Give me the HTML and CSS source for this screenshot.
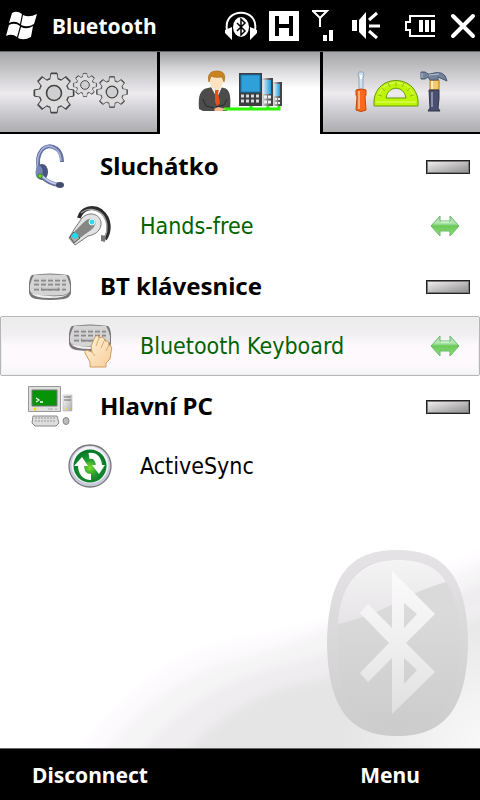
FILE: index.html
```
<!DOCTYPE html>
<html lang="en">
<head>
    <meta charset="UTF-8">
    <meta name="viewport" content="width=device-width, initial-scale=1.0">
    <title>Bluetooth</title>
    <link rel="stylesheet" href="styles.css">
</head>
<body>

    <!-- shared shapes -->
    <svg class="defs" width="0" height="0" aria-hidden="true">
        <defs>
            <linearGradient id="metal" x1="0" y1="0" x2="1" y2="1">
                <stop offset="0" stop-color="#fff"/>
                <stop offset="1" stop-color="#aaa"/>
            </linearGradient>
            <linearGradient id="phone" x1="0" y1="0" x2="1" y2="0">
                <stop offset="0" stop-color="#e4e4e4"/>
                <stop offset="0.8" stop-color="#444"/>
            </linearGradient>
            <linearGradient id="screen" x1="0" y1="0" x2="1" y2="0">
                <stop offset="0" stop-color="#d4ecf8"/>
                <stop offset="1" stop-color="#1e9cdc"/>
            </linearGradient>
            <linearGradient id="arrow" x1="0" y1="0" x2="0" y2="1">
                <stop offset="0" stop-color="#9fdfa0"/>
                <stop offset="0.35" stop-color="#b4e8b4"/>
                <stop offset="0.5" stop-color="#6cc85c"/>
                <stop offset="1" stop-color="#8fe36a"/>
            </linearGradient>
            <linearGradient id="skin" x1="0" y1="0" x2="1" y2="1">
                <stop offset="0" stop-color="#fff4dc"/>
                <stop offset="1" stop-color="#f7cd98"/>
            </linearGradient>
            <radialGradient id="green" cx="0.5" cy="0.55" r="0.5">
                <stop offset="0" stop-color="#7cdc2c"/>
                <stop offset="0.5" stop-color="#1f9a30"/>
                <stop offset="1" stop-color="#067a28"/>
            </radialGradient>
            <g id="teeth">
                <circle r="15"/>
                <path id="tooth" d="M-4-14 -3-20H3L4-14V14L3 20H-3L-4 14Z"/>
                <use href="#tooth" transform="rotate(45)"/>
                <use href="#tooth" transform="rotate(90)"/>
                <use href="#tooth" transform="rotate(135)"/>
            </g>
            <g id="gear">
                <use href="#teeth" fill="#444" stroke="#444"/>
                <use href="#teeth" fill="#dcdcdc" transform="scale(.94)"/>
                <circle r="7.5" fill="#cfced1" stroke="#444" stroke-width="1.6"/>
            </g>
            <g id="keyboard">
                <path d="M4 2Q22-1 40 2Q42 3 43 10V20Q42 25 36 26Q22 28 8 26Q2 25 1 20V10Q2 3 4 2Z" fill="#777"/>
                <path d="M6 2Q22 1 38 2Q40 5 42 12V18Q40 21 35 22Q22 23 9 22Q4 21 2 18V12Q4 5 6 2Z" fill="#d4d4d4"/>
                <path d="M3 20Q7 22 22 23T41 20Q38 25 22 25T3 20Z" fill="#f0f0f0"/>
                <path d="M6 7H38M6 11H38M6 16H38" stroke="#8a8a8a" stroke-width="3" stroke-dasharray="5 2"/>
                <path d="M6 6H38M6 10H38M6 15H38" stroke="#eee" stroke-dasharray="5 2"/>
                <path d="M13 16H31" stroke="#8a8a8a" stroke-width="3"/>
                <path d="M14 15H30" stroke="#eee"/>
            </g>
            <symbol id="connected" viewBox="0 0 30 22">
                <path d="M1 11 10 1V6H20V1L29 11 20 21V16H10V21Z" fill="url(#arrow)" stroke="#67b96b"/>
                <path d="M11 7H19" stroke="#e4f8e4"/>
            </symbol>
        </defs>
    </svg>

    <header class="status-bar">
        <button class="start" aria-label="Start">
            <svg width="32" height="30" viewBox="0 0 32 30">
                <path d="M6 2Q11-1 16 3L14 13Q9 9 3 12ZM17 4Q23 7 31 3L28 13Q22 17 15 14ZM3 14Q9 11 14 15L11 26Q6 22 0 25ZM15 16Q21 19 27 15L25 26Q18 30 12 27Z" fill="#fff"/>
            </svg>
        </button>
        <h1 class="title">Bluetooth</h1>
        <div class="indicators">
            <svg width="32" height="30" viewBox="0 0 32 30">
                <path d="M2 19C-2-4 34-4 30 19" fill="none" stroke="#fff" stroke-width="2"/>
                <path d="M0 19 7 16V29L0 22ZM32 19 25 16V29L32 22Z" fill="#fff"/>
                <ellipse cx="16" cy="16" rx="8" ry="10" fill="#fff"/>
                <path d="M12 12 20 20 16 24V8L20 12 12 20" fill="none" stroke="#000" stroke-width="1.5"/>
            </svg>
            <svg width="30" height="30" viewBox="0 0 30 30">
                <path d="M0 0H30V30H0Z" fill="#fff"/>
                <path d="M6 5H10V13H20V5H24V25H20V17H10V25H6Z" fill="#000"/>
            </svg>
            <svg width="28" height="31" viewBox="0 0 28 31">
                <path d="M1 1H16L9 8V17M9 8 2 1" fill="none" stroke="#fff" stroke-width="2"/>
                <path d="M12 25H16V31H12ZM18 20H22V31H18Z" fill="#fff"/>
            </svg>
            <svg width="28" height="28" viewBox="0 0 28 28">
                <path d="M1 8H6V19H1ZM8 8 15 0V27L8 20Z" fill="#fff"/>
                <path d="M18 8 26 1M18 14H29M18 19 26 26" stroke="#fff" stroke-width="3"/>
            </svg>
            <svg class="battery" width="30" height="22" viewBox="0 0 30 22">
                <path d="M30 1H5V7H1V15H5V21H30" fill="none" stroke="#fff" stroke-width="2"/>
                <path d="M14 5H18V17H14ZM20 5H24V17H20ZM26 5H30V17H26Z" fill="#fff"/>
            </svg>
        </div>
        <button class="close" aria-label="Close">
            <svg width="24" height="24" viewBox="0 0 24 24">
                <path d="M2 2 22 22M22 2 2 22" stroke="#fff" stroke-width="4" stroke-linecap="round"/>
            </svg>
        </button>
    </header>

    <nav class="tabs">
        <button class="tab" aria-label="Settings">
            <svg width="96" height="42" viewBox="0 0 96 42">
                <use href="#gear" transform="translate(23 22)"/>
                <use href="#gear" transform="translate(54 14) scale(.58)"/>
                <use href="#gear" transform="translate(81 21) scale(.77)"/>
            </svg>
        </button>
        <button class="tab active" aria-label="Devices">
            <svg width="84" height="42" viewBox="0 0 84 42">
                <path d="M1 38Q-1 18 10 17L18 15 26 17Q34 18 32 38L28 40H5Z" fill="#4c4c4c"/>
                <path d="M13 16 19 27 24 16Z" fill="#f5f5f8"/>
                <path d="M17 19H21L20 22 22 32 19 35 17 31Z" fill="#e85114"/>
                <path d="M12 8C12 3 25 3 25 9C25 15 22 19 18 19C14 19 12 14 12 8Z" fill="#fde2c0"/>
                <path d="M11 11C9 3 13 0 19 0C26 0 28 4 26 11L24 6Q16 7 13 5Z" fill="#c88420" stroke="#99600f" stroke-width=".6"/>
                <path d="M5 28 8 35 16 37M29 28 26 34 18 36" fill="none" stroke="#282828"/>
                <path d="M75 11H84V35H75Z" fill="url(#phone)"/>
                <path d="M76 13H82V25H76Z" fill="url(#screen)"/>
                <path d="M77 28H82M77 32H82" stroke="#eee" stroke-width="2" stroke-dasharray="2 1"/>
                <path d="M64 7H75V35H64Z" fill="url(#phone)"/>
                <path d="M65 9H73V23H65Z" fill="url(#screen)"/>
                <path d="M66 26H73M66 31H73" stroke="#eee" stroke-width="3" stroke-dasharray="3 1"/>
                <path d="M41 2H64V35H41Z" fill="#3c3d40"/>
                <path d="M43 4H62V21H43Z" fill="#30a0d8" stroke="#167ab8"/>
                <path d="M43 25H62M43 30H62" stroke="#d8d8d8" stroke-width="3" stroke-dasharray="3 2"/>
                <path d="M26 38H81V35M53 37V35M70 37V35" fill="none" stroke="#2bf500" stroke-width="3"/>
                <path d="M16 38 20 36 28 38 24 40H17Z" fill="#f2b893"/>
            </svg>
        </button>
        <button class="tab" aria-label="Tools">
            <svg width="94" height="42" viewBox="0 0 94 42">
                <path d="M4 1H8L9 4 8 7V19H4V7L3 4Z" fill="#cfe2f1" stroke="#7790aa" stroke-width=".7"/>
                <path d="M5 4H7V8H5Z" fill="#fff"/>
                <path d="M1 19Q6 17 11 19V24L10 26 11 39Q6 42 1 39L2 26 1 24Z" fill="#f8691d" stroke="#c44704"/>
                <path d="M4 20V38" stroke="#ffaf79" stroke-width="2"/>
                <path fill-rule="evenodd" d="M19 35V29C22 3 60 3 63 29V35ZM31 27H51C49 14 33 14 31 27Z" fill="#bdf505" stroke="#679610"/>
                <path d="M21 31H61M23 26C28 7 54 7 59 26" stroke="#e5ff75" fill="none"/>
                <path d="M23 24 27 25M27 17 30 20M33 12 35 16M41 11V15M49 12 47 16M55 17 52 20M59 24 55 25" stroke="#7ba60a" stroke-width=".7"/>
                <path d="M75 9H84V19H75Z" fill="#f4cb66" stroke="#b17b20"/>
                <path d="M77 10V18" stroke="#fff0b4" stroke-width="2"/>
                <path d="M66 1H70L73 3H75Q90-2 92 10L83 6 83 9H75L73 6 70 8H66Z" fill="#748399" stroke="#475771"/>
                <path d="M67 2V7M74 4 84 3" stroke="#b6c6da"/>
                <path d="M74 19H84V28L83 37 85 40H73L75 37Z" fill="#4b506e" stroke="#30344e"/>
                <path d="M77 21V36" stroke="#8890ad" stroke-width="2"/>
            </svg>
        </button>
    </nav>

    <main class="content">
        <svg class="backdrop" viewBox="0 0 480 220" aria-hidden="true">
            <defs>
                <filter id="soft">
                    <feGaussianBlur stdDeviation="5"/>
                </filter>
                <radialGradient id="glow" gradientUnits="userSpaceOnUse" cx="490" cy="220" r="150">
                    <stop offset="0" stop-color="#fff" stop-opacity="0.8"/>
                    <stop offset="1" stop-color="#fff" stop-opacity="0"/>
                </radialGradient>
                <linearGradient id="badge" x1="0" y1="0" x2="0" y2="1">
                    <stop offset="0" stop-color="#e6e3e6"/>
                    <stop offset="0.5" stop-color="#d8d8d8"/>
                    <stop offset="1" stop-color="#cccccd"/>
                </linearGradient>
                <linearGradient id="inner" x1="0" y1="0" x2="0" y2="1">
                    <stop offset="0.3" stop-color="#dbdadb"/>
                    <stop offset="1" stop-color="#cccccd"/>
                </linearGradient>
                <linearGradient id="shine" x1="0" y1="0" x2="0" y2="1">
                    <stop offset="0" stop-color="#f5f4f5"/>
                    <stop offset="1" stop-color="#e6e4e6"/>
                </linearGradient>
                <linearGradient id="rune" x1="0" y1="0" x2="0" y2="1">
                    <stop offset="0" stop-color="#fcfbfc"/>
                    <stop offset="0.5" stop-color="#f0eff0"/>
                    <stop offset="1" stop-color="#e0e0e1"/>
                </linearGradient>
            </defs>
            <g filter="url(#soft)">
                <path d="M70 240C140 135 200 118 270 107C360 90 420 50 500 17V240Z" fill="#fdfafd"/>
                <path d="M93 240C140 169 195 140 235 131C330 105 410 65 500 29V240Z" fill="#f6f5f6"/>
                <path d="M128 240C190 161 240 147 310 130C380 110 430 78 500 46V240Z" fill="#efedef"/>
                <path d="M175 240C220 178 270 161 310 153C380 138 430 110 500 80V240Z" fill="#e6e5e6"/>
            </g>
            <path d="M340 70H480V220H340Z" fill="url(#glow)"/>
            <path d="M397 22C445 22 467 48 468 115C467 180 445 208 397 208C349 208 328 180 327 115C328 48 349 22 397 22Z" fill="url(#badge)"/>
            <path d="M397 32C441 32 459 57 460 116C459 174 439 200 397 200C355 200 338 174 337 116C338 57 353 32 397 32Z" fill="url(#inner)"/>
            <path d="M397 32C423 32 438 40 446 54C405 65 390 84 338 96C341 51 363 32 397 32Z" fill="url(#shine)"/>
            <path fill-rule="evenodd" d="M392 43 435 86 406 115 435 144 392 186V130L368 154 360 145 389 115 360 85 368 76 392 100ZM404 75V100L417 86ZM404 130V156L417 142Z" fill="url(#rune)"/>
        </svg>

        <section class="device">
            <h2 class="device-head">
                <svg class="icon" width="44" height="44" viewBox="0 0 44 44">
                    <path d="M11 26C7 8 17-3 29 5Q34 9 34 18" fill="none" stroke="#626f9f" stroke-width="4"/>
                    <path d="M10 26C7 8 17-3 28 5Q33 9 33 17" fill="none" stroke="#a7b4da" stroke-width="1.5"/>
                    <ellipse cx="14" cy="28" rx="6" ry="8" fill="#495580"/>
                    <path d="M10 21C16 22 16 32 11 35C6 33 7 25 10 21Z" fill="#7886b6"/>
                    <path d="M13 32Q21 40 31 41" fill="none" stroke="#626e9f" stroke-width="4"/>
                    <path d="M13 31Q21 39 29 40" fill="none" stroke="#c1cceb" stroke-width="2"/>
                    <circle cx="12" cy="32" r="2.2" fill="#6bdc24" stroke="#387f24"/>
                    <ellipse cx="32" cy="41" rx="4" ry="3" fill="#424d70"/>
                </svg>
                <span class="label">Sluchátko</span>
                <button class="collapse" aria-label="Collapse Sluchátko"></button>
            </h2>
            <button class="service on">
                <svg class="icon" width="44" height="44" viewBox="0 0 44 44">
                    <path d="M11 14C14 3 26 2 33 7C43 15 42 28 37 35" fill="none" stroke="#2c2c2c" stroke-width="4"/>
                    <path d="M13 9C20 3 29 5 35 11C40 18 40 27 37 33" fill="none" stroke="#a0a0a0" stroke-width="1.3"/>
                    <path d="M12 17C17 7 31 8 33 18C34 26 27 31 20 32L7 41 1 34 7 24Z" fill="#e2e2e2" stroke="#777"/>
                    <path d="M14 20Q21 12 27 16Q29 21 23 26L12 34 6 28Z" fill="#868686"/>
                    <circle cx="24" cy="18" r="3" fill="#37d8e8" stroke="#dff"/>
                    <path d="M2 33 6 28 12 34 6 39Z" fill="#aaa" stroke="#555"/>
                    <path d="M7 28 11 32 7 35 3 32Z" fill="#20dcec"/>
                    <path d="M33 31 38 32 37 38 33 37Z" fill="#777"/>
                </svg>
                <span class="label">Hands-free</span>
                <svg class="state" width="30" height="22"><use href="#connected"/></svg>
            </button>
        </section>

        <section class="device">
            <h2 class="device-head">
                <svg class="icon" width="44" height="44" viewBox="0 0 44 44">
                    <use href="#keyboard" transform="translate(0 9)"/>
                </svg>
                <span class="label">BT klávesnice</span>
                <button class="collapse" aria-label="Collapse BT klávesnice"></button>
            </h2>
            <button class="service on selected">
                <svg class="icon" width="44" height="44" viewBox="0 0 44 44">
                    <use href="#keyboard"/>
                    <path d="M22 43V38L17 29Q17 25 21 27L24 28 23 22 27 13Q30 10 31 14L34 13Q37 14 37 17Q41 16 41 21Q45 22 43 28L42 35 38 39V43Z" fill="url(#skin)" stroke="#d09a60"/>
                    <path d="M31 14 28 22M36 17 33 24M41 21 38 27M24 28 27 32" stroke="#dcaa70" fill="none"/>
                </svg>
                <span class="label">Bluetooth Keyboard</span>
                <svg class="state" width="30" height="22"><use href="#connected"/></svg>
            </button>
        </section>

        <section class="device">
            <h2 class="device-head">
                <svg class="icon" width="44" height="44" viewBox="0 0 44 44">
                    <path d="M.5 2.5H32.500V27.500H.5Z" fill="#dedede" stroke="#999"/>
                    <path d="M4 6H29V22H4Z" fill="#079307" stroke="#777"/>
                    <path d="M8 14 11 16 8 18M12 18H15" fill="none" stroke="#fff" stroke-width="1.3"/>
                    <circle cx="7" cy="25" r="1.5" fill="#f2d900"/>
                    <path d="M20 25H25M27 25H29" stroke="#aaa"/>
                    <path d="M35 11H44V27H35Z" fill="url(#metal)" stroke="#aaa" stroke-width=".5"/>
                    <path d="M36 13H43M36 16H43" stroke="#666"/>
                    <circle cx="39" cy="25" r="1" fill="#eeda30"/>
                    <path d="M5 32H29L31 39 28 42H7L4 39Z" fill="#ddd" stroke="#888"/>
                    <path d="M7 34H28M7 37H28" stroke="#bbb" stroke-width="2" stroke-dasharray="2 1"/>
                    <ellipse cx="38" cy="37" rx="3" ry="3.5" fill="#bbb" stroke="#888"/>
                </svg>
                <span class="label">Hlavní PC</span>
                <button class="collapse" aria-label="Collapse Hlavní PC"></button>
            </h2>
            <button class="service">
                <svg class="icon" width="44" height="44" viewBox="0 0 44 44">
                    <circle cx="22" cy="22" r="21" fill="#c9c9dc" stroke="#777" stroke-width="1.3"/>
                    <circle cx="22" cy="21" r="18.5" fill="#f3f3f8"/>
                    <circle cx="22" cy="22" r="16.5" fill="url(#green)"/>
                    <path d="M21 12C27 11 31 15 31 23M23 33C17 33 13 29 13 21" fill="none" stroke="#fff" stroke-width="6"/>
                    <path d="M24 21H37L31 30ZM6 22H20L14 13Z" fill="#fff"/>
                </svg>
                <span class="label">ActiveSync</span>
            </button>
        </section>
    </main>

    <footer class="soft-keys">
        <button class="soft-key">Disconnect</button>
        <button class="soft-key">Menu</button>
    </footer>

</body>
</html>
```
FILE: styles.css
```
* {
    box-sizing: border-box;
}

body {
    display: flex;
    flex-direction: column;
    min-height: 100vh;
    margin: 0;
    background-color: #fff;
    color: #000;
    font-family: "Noto Sans", "Open Sans", sans-serif;
}

button {
    margin: 0;
    padding: 0;
    border: 0;
    background: none;
    color: inherit;
    font: inherit;
    cursor: pointer;
}

svg {
    display: block;
    flex: none;
    overflow: visible;
}

.defs {
    position: absolute;
}

.status-bar {
    display: flex;
    align-items: center;
    height: 52px;
    padding: 0 5px 0 6px;
    background-color: #000;
    border-bottom: 1px solid #666;
    color: #fff;
}

.title {
    flex: 1;
    margin: 0 0 0 14px;
    font-size: 21px;
    font-weight: bold;
    line-height: 50px;
}

.indicators {
    display: flex;
    align-items: center;
    gap: 12px;
    margin-right: 16px;
}

.battery {
    margin-left: 14px;
}

.tabs {
    display: grid;
    grid-template-columns: repeat(3, 1fr);
    height: 82px;
}

.tab {
    display: flex;
    justify-content: center;
    align-items: center;
    background: linear-gradient(#a5a6a9, #cfced1 30%, #eeebef 52%, #cccbd0 75%, #adadb0);
    border-bottom: 2px solid #000;
}

.tab:first-child {
    border-right: 3px solid #000;
}

.tab:last-child {
    border-left: 3px solid #000;
}

.tab.active {
    background: linear-gradient(#a0a2a3, #d4d3d6 20%, #fff 45%);
    border-bottom-color: #fff;
}

.content {
    position: relative;
    flex: 1;
    padding: 2px 0 10px;
}

/* sits behind the list, anchored to the bottom of the page */
.backdrop {
    position: absolute;
    right: 0;
    bottom: 0;
    width: 100%;
    overflow: hidden;
}

.device {
    position: relative;
}

.device-head,
.service {
    display: flex;
    align-items: center;
    width: 100%;
    height: 60px;
    margin: 0;
    padding: 0 10px 0 28px;
    font-size: 24px;
    line-height: 32px;
    text-align: left;
}

.device-head {
    font-weight: bold;
}

.service {
    padding: 0 20px 0 68px;
    font-family: "DejaVu Sans Condensed", "Noto Sans", sans-serif;
    font-size: 23px;
    font-weight: normal;
}

.label {
    flex: 1;
    margin-left: 28px;
}

.on .label {
    color: #006400;
}

.selected {
    background: linear-gradient(#ececec, #f1eff1 30%, #fdf9fd 50%, #fdf9fd 80%, #f5f5f5);
    border: 1px solid #b5b5b8;
    border-radius: 2px;
    box-shadow: inset 0 0 0 1px #f0f0f0;
}

.selected.service {
    padding: 0 19px 0 67px;
}

.collapse {
    width: 44px;
    height: 14px;
    margin-top: 2px;
    border: 1px solid #222;
    background: linear-gradient(165deg, #f5f1f4, #8c8c8c);
    box-shadow: inset 0 0 0 1px #777;
}

.soft-keys {
    display: grid;
    grid-template-columns: 1fr 1fr;
    height: 52px;
    background-color: #000;
    border-top: 1px solid #666;
    color: #fff;
}

.soft-key {
    font-size: 21px;
    font-weight: bold;
    line-height: 48px;
}

.soft-key:first-child {
    padding-right: 60px;
}

.soft-key:last-child {
    padding-left: 60px;
}
```
